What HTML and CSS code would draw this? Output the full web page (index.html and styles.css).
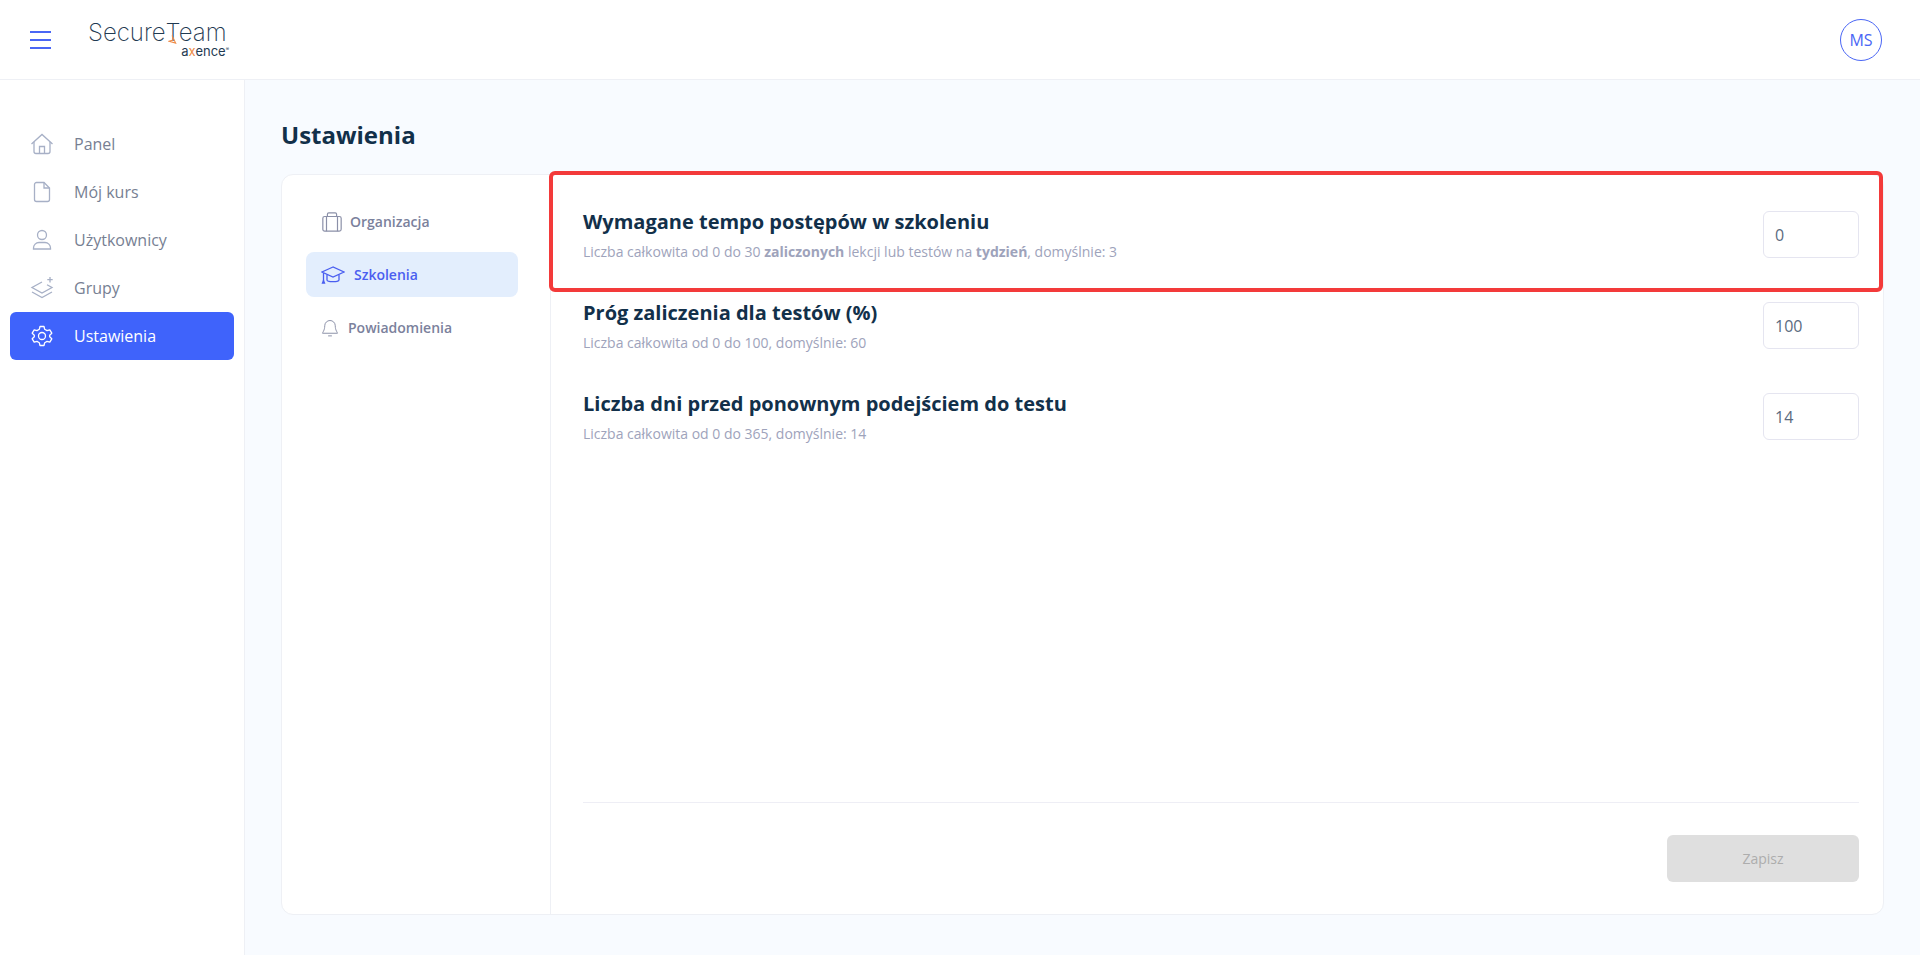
FILE: index.html
```html
<!DOCTYPE html>
<html lang="pl">

<head>
  <title>Ustawienia - SecureTeam</title>
  <meta charset="utf-8">
  <link rel="stylesheet" href="styles.css">
</head>

<body>
  <header class="topbar">
    <button class="burger" aria-label="Menu"><span></span><span></span><span></span></button>
    <div class="logo">
      <div class="logo-name">Secure<svg class="logo-mark" viewBox="0 0 10 10" width="9" height="9"><path d="M4.500 .5 L8.500 9 L1 7 L5.500 5.500" fill="none" stroke="#ee8a45" stroke-width="1.200"/></svg>Team</div>
      <div class="logo-sub">a<span class="logo-x">x</span>ence<sup>®</sup></div>
    </div>
    <div class="avatar">MS</div>
  </header>

  <div class="layout">
    <nav class="sidebar">
      <a class="nav-item">
        <svg viewBox="0 0 24 24"><path d="M1.500 12 L12 2.500 L22.500 12"/><path d="M4 10 V19.500 a2 2 0 0 0 2 2 H18 a2 2 0 0 0 2 -2 V10"/><path d="M9.500 21.500 V14.500 h5 V21.500"/></svg>
        Panel
      </a>
      <a class="nav-item">
        <svg viewBox="0 0 24 24"><path d="M6.500 2.500 H14 L19.500 8 V19.500 a2 2 0 0 1 -2 2 H6.500 a2 2 0 0 1 -2 -2 V4.500 a2 2 0 0 1 2 -2 Z"/><path d="M14 2.500 V8 H19.500"/></svg>
        Mój kurs
      </a>
      <a class="nav-item">
        <svg viewBox="0 0 24 24"><circle cx="12" cy="7" r="4.500"/><path d="M3.500 21 v-1 a5.500 5.500 0 0 1 5.500 -5.500 h6 a5.500 5.500 0 0 1 5.500 5.500 v1 Z"/></svg>
        Użytkownicy
      </a>
      <a class="nav-item">
        <svg viewBox="0 0 24 24"><path d="M12 6 L2 11.500 L12 17 L22 11.500 L17 8.700"/><path d="M2 16 L12 21.500 L22 16"/><path d="M20 1 V6.500 M17.300 3.700 H22.700"/></svg>
        Grupy
      </a>
      <a class="nav-item active">
        <svg viewBox="0 0 24 24"><circle cx="12" cy="12" r="3.500"/><path d="M10 2.500 h4 l.7 2.800 2.300 1.300 2.800-.8 2 3.400-2.100 2 v1.600 l2.100 2-2 3.400-2.800-.8-2.300 1.300-.7 2.800 h-4 l-.7-2.800-2.300-1.300-2.800 .8-2-3.400 2.100-2 v-1.600 l-2.100-2 2-3.400 2.800 .8 2.300-1.300 Z" stroke-linejoin="round"/></svg>
        Ustawienia
      </a>
    </nav>

    <main class="main">
      <h1 class="page-title">Ustawienia</h1>

      <section class="card">
        <aside class="tabs">
          <a class="tab">
            <svg viewBox="0 0 24 24" class="tab-icon briefcase"><rect x="2" y="6" width="20" height="16" rx="2"/><path d="M7 6 V3.500 a1.500 1.500 0 0 1 1.500 -1.500 h7 a1.500 1.500 0 0 1 1.500 1.500 V6"/><path d="M6 6 V22 M18 6 V22"/></svg>
            Organizacja
          </a>
          <a class="tab active">
            <svg viewBox="0 0 24 24" class="tab-icon wide"><path d="M12 4 L1 9 L12 14 L23 9 Z"/><path d="M6 11.500 V17 c0 2 12 2.500 12 0 V11.500"/><path d="M2.500 10 V18"/><path d="M1.500 20 L2.500 17.500 L3.500 20 Z"/></svg>
            Szkolenia
          </a>
          <a class="tab">
            <svg viewBox="0 0 24 24" class="tab-icon"><path d="M12 2 a7 7 0 0 0 -7 7 c0 6 -3 9 -3 10 H22 c0 -1 -3 -4 -3 -10 a7 7 0 0 0 -7 -7 Z"/><path d="M9.500 22.500 h5"/></svg>
            Powiadomienia
          </a>
        </aside>

        <form class="settings">
          <div class="settings-list">
            <div class="setting">
              <div>
                <h3>Wymagane tempo postępów w szkoleniu</h3>
                <p>Liczba całkowita od 0 do 30 <b>zaliczonych</b> lekcji lub testów na <b>tydzień</b>, domyślnie: 3</p>
              </div>
              <input type="text" value="0">
            </div>
            <div class="setting">
              <div>
                <h3>Próg zaliczenia dla testów (%)</h3>
                <p>Liczba całkowita od 0 do 100, domyślnie: 60</p>
              </div>
              <input type="text" value="100">
            </div>
            <div class="setting">
              <div>
                <h3>Liczba dni przed ponownym podejściem do testu</h3>
                <p>Liczba całkowita od 0 do 365, domyślnie: 14</p>
              </div>
              <input type="text" value="14">
            </div>
          </div>
          <div class="settings-footer">
            <button type="button" class="save" disabled>Zapisz</button>
          </div>
        </form>

        <div class="highlight"></div>
      </section>
    </main>
  </div>
</body>

</html>
```

FILE: styles.css
```css
* {
  box-sizing: border-box;
}

body {
  font-family: "Open Sans", Arial, sans-serif;
  background-color: #f8fbff;
  color: #12304a;
  margin: 0;
  height: 955px;
  display: flex;
  flex-direction: column;
  overflow: hidden;
}

.topbar {
  height: 80px;
  background-color: #fff;
  border-bottom: 1px solid #eef0f5;
  display: flex;
  align-items: center;
  padding: 0 38px 0 30px;
  flex-shrink: 0;
}

.burger {
  width: 21px;
  height: 18px;
  padding: 0;
  border: none;
  background: none;
  display: flex;
  flex-direction: column;
  justify-content: space-between;
}

.burger span {
  display: block;
  height: 2px;
  background-color: #4a66f5;
}

.logo {
  margin-left: 37px;
  margin-top: -1px;
  width: 142px;
  color: #1f3a52;
}

.logo-name {
  font-family: Inter, sans-serif;
  font-weight: 200;
  font-size: 24px;
  line-height: 23px;
  white-space: nowrap;
  position: relative;
}

.logo-mark {
  position: absolute;
  left: 80px;
  top: 14px;
}

.logo-sub {
  font-family: Inter, sans-serif;
  font-size: 13px;
  line-height: 11px;
  margin-top: 2px;
  text-align: right;
  padding-right: 1px;
}

.logo-x {
  color: #ee8a45;
}

.logo-sub sup {
  font-size: 5px;
  line-height: 0;
}

.avatar {
  width: 42px;
  height: 42px;
  margin-left: auto;
  border: 1px solid #4a66f5;
  border-radius: 50%;
  color: #4a66f5;
  font-size: 16px;
  display: flex;
  align-items: center;
  justify-content: center;
}

.layout {
  flex: 1;
  display: flex;
  min-height: 0;
}

.sidebar {
  width: 245px;
  background-color: #fff;
  border-right: 1px solid #eef0f5;
  padding: 40px 10px 0;
  flex-shrink: 0;
}

.nav-item {
  height: 48px;
  display: flex;
  align-items: center;
  padding-left: 20px;
  gap: 20px;
  border-radius: 6px;
  font-size: 16px;
  color: #777f93;
}

.nav-item svg {
  width: 24px;
  height: 24px;
  fill: none;
  stroke: #a7b0c6;
  stroke-width: 1.300;
}

.nav-item.active {
  background-color: #3f63fb;
  color: #fff;
}

.nav-item.active svg {
  stroke: #fff;
}

.main {
  flex: 1;
  padding: 0 36px 40px;
  display: flex;
  flex-direction: column;
}

.page-title {
  font-size: 24px;
  font-weight: 700;
  line-height: 32px;
  margin: 39px 0 23px;
  color: #12304a;
}

.card {
  flex: 1;
  position: relative;
  display: flex;
  background-color: #fff;
  border: 1px solid #eef0f5;
  border-radius: 12px;
}

.tabs {
  width: 269px;
  padding: 24px 32px 0 24px;
  border-right: 1px solid #eef0f5;
  display: flex;
  flex-direction: column;
  gap: 8px;
}

.tab {
  height: 45px;
  display: flex;
  align-items: center;
  padding-left: 15px;
  gap: 9px;
  border-radius: 8px;
  font-size: 14px;
  font-weight: 600;
  color: #7b819c;
}

.tab-icon {
  width: 18px;
  height: 18px;
  fill: none;
  stroke: #8b90a8;
  stroke-width: 1.300;
}

.tab-icon.briefcase {
  width: 22px;
  height: 22px;
  margin-right: -2px;
}

.tab-icon.wide {
  width: 24px;
  height: 24px;
}

.tab.active {
  background-color: #e3eefd;
  color: #4a5ef0;
}

.tab.active .tab-icon {
  stroke: #4a5ef0;
}

.settings {
  flex: 1;
  padding: 33px 24px 32px 32px;
  display: flex;
  flex-direction: column;
}

.settings-list {
  flex: 1;
}

.setting {
  height: 91px;
  display: flex;
  justify-content: space-between;
  align-items: flex-start;
}

.setting h3 {
  font-size: 20px;
  font-weight: 700;
  line-height: 28px;
  margin: 0 0 6px;
  color: #12304a;
}

.setting p {
  font-size: 14px;
  line-height: 20px;
  margin: 0;
  color: #9ea3bb;
}

.setting input {
  width: 96px;
  height: 47px;
  margin-top: 3px;
  border: 1px solid #e5e5f0;
  border-radius: 6px;
  padding: 0 11px;
  font-family: inherit;
  font-size: 16px;
  color: #5b6b80;
  background-color: #fff;
}

.settings-footer {
  border-top: 1px solid #eeeef5;
  padding-top: 32px;
  display: flex;
  justify-content: flex-end;
}

.save {
  width: 192px;
  height: 47px;
  border: none;
  border-radius: 6px;
  background-color: #dfdfdf;
  color: #adadad;
  font-family: inherit;
  font-size: 14px;
}

/* red annotation drawn over the first row */
.highlight {
  position: absolute;
  left: 267px;
  right: 0;
  top: -4px;
  height: 121px;
  border: 4px solid #f33a3a;
  border-radius: 6px;
  pointer-events: none;
}
```
